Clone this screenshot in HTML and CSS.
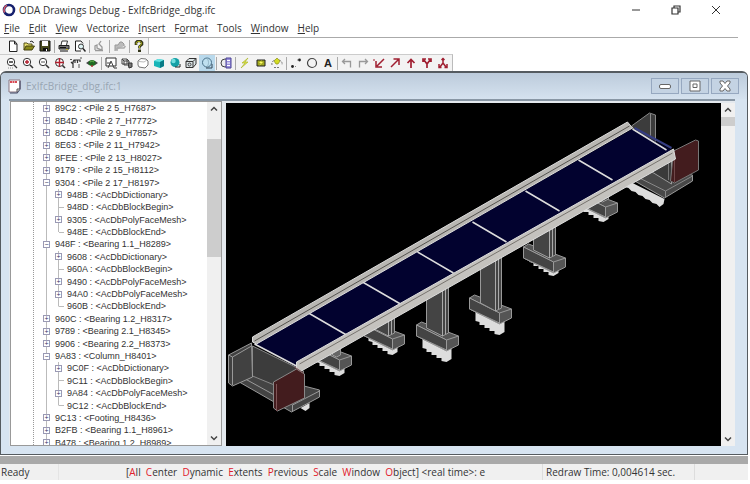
FILE: index.html
```html
<!DOCTYPE html>
<html lang="en">
<head>
  <meta charset="UTF-8">
  <title>ODA Drawings Debug - ExIfcBridge_dbg.ifc</title>
  <link rel="stylesheet" href="styles.css">
</head>
<body>
  <header class="titlebar">
    <svg class="logo" viewBox="0 0 14 14"><circle cx="7" cy="7" r="5" fill="none" stroke="#16206e" stroke-width="2.6"/><path d="M2.6 9.5A5 5 0 0 1 5 2.4" fill="none" stroke="#e0606a" stroke-width="1.4"/></svg>
    <h1>ODA Drawings Debug - ExIfcBridge_dbg.ifc</h1>
    <div class="window-buttons">
      <button aria-label="Minimize"><svg viewBox="0 0 10 10"><path d="M1 5h8" stroke="#333"/></svg></button>
      <button aria-label="Restore"><svg viewBox="0 0 10 10" fill="none" stroke="#333" stroke-width="1.2"><path d="M1 3h6v6H1zM3 3V1h6v6H7"/></svg></button>
      <button aria-label="Close"><svg viewBox="0 0 10 10"><path d="M1 1l8 8M9 1L1 9" stroke="#333"/></svg></button>
    </div>
  </header>

  <nav class="menu">
    <button><u>F</u>ile</button>
    <button><u>E</u>dit</button>
    <button><u>V</u>iew</button>
    <button>Vectorize</button>
    <button><u>I</u>nsert</button>
    <button>F<u>o</u>rmat</button>
    <button>Tools</button>
    <button><u>W</u>indow</button>
    <button><u>H</u>elp</button>
  </nav>

  <div class="toolbar">
    <button aria-label="New"><svg viewBox="0 0 12 12"><path d="M2.5 1h5l2.500 3v7.500H2.500zM7.500 1v3H10" fill="#fff" stroke="#222"/></svg></button>
    <button aria-label="Open"><svg viewBox="0 0 12 12"><path d="M1 10V3h3l1 1h4v2" fill="#e8e070" stroke="#55501a"/><path d="M1 10l2-4h8.500l-2.500 4z" fill="#8a8a18" stroke="#444010"/><path d="M7 2c1-1.500 3-1 3.500 1" fill="none" stroke="#222"/></svg></button>
    <button aria-label="Save"><svg viewBox="0 0 12 12"><path d="M1 1h10v10H1z" fill="#4a4c20" stroke="#111"/><path d="M3 1h6v5H3z" fill="#fff"/><path d="M4 8h5v3H4z" fill="#111"/><path d="M7 9h1v2H7z" fill="#fff"/></svg></button>
    <i></i>
    <button aria-label="Print"><svg viewBox="0 0 12 12"><path d="M3 5l1-4h5.500l-1 4" fill="#fff" stroke="#333"/><path d="M1 5.500h10V9H1z" fill="#777" stroke="#222"/><path d="M2 11h8M2 7.500h6" stroke="#111"/><path d="M8 9.500h2" stroke="#bdb52a"/></svg></button>
    <button aria-label="Print preview"><svg viewBox="0 0 12 12"><path d="M7 11H1.500V1H7l2 2.500" fill="#fff" stroke="#222"/><circle cx="7" cy="6.500" r="2.500" fill="#dff4f4" stroke="#333"/><path d="M9 8.500l2.500 3" stroke="#222" stroke-width="1.500"/></svg></button>
    <i></i>
    <button aria-label="Cut" disabled><svg viewBox="0 0 12 12"><path d="M2 10V6l2-1v3l5 2V7L6 4l2-3M2 10.500h8" fill="none" stroke="#999" stroke-width="1.300"/></svg></button>
    <i class="wide"></i>
    <button aria-label="Paste" disabled><svg viewBox="0 0 12 12"><path d="M1 11V5h3l2-3h2l2 2v2" fill="#bbb" stroke="#999"/><path d="M3 8h7l1.500-2M3 8v3" fill="none" stroke="#aaa" stroke-width="1.500"/></svg></button>
    <i></i>
    <button aria-label="About"><svg viewBox="0 0 12 12"><path d="M3 5V2.500L4.500 1h3L9 2.500v2L6.500 6.500V8.500" fill="none" stroke="#33351a" stroke-width="2.600"/><path d="M3.300 4.500v-2l1.500-1h2.500l1 1v2L6.500 6v2" fill="none" stroke="#b3b51c"/><path d="M5 9.500h3V12H5z" fill="#33351a"/></svg></button>
  </div>

  <div class="toolbar toolbar-view">
    <button aria-label="Zoom window"><svg viewBox="0 0 12 12"><circle cx="5" cy="5" r="3.700" fill="#fff" stroke="#333"/><path d="M3 5h4M8 8l3 3" stroke="#333" stroke-width="1.300"/><path d="M2 11h6" stroke="#888" stroke-dasharray="1 1"/></svg></button>
    <button aria-label="Zoom in"><svg viewBox="0 0 12 12"><circle cx="5" cy="5" r="3.700" fill="#fff" stroke="#333"/><path d="M3 5h4M5 3v4" stroke="#b3202f" stroke-width="1.400"/><path d="M8 8l3 3" stroke="#333" stroke-width="1.600"/></svg></button>
    <button aria-label="Zoom out"><svg viewBox="0 0 12 12"><circle cx="5" cy="5" r="3.700" fill="#fff" stroke="#333"/><path d="M3 5h4" stroke="#555"/><path d="M8 8l3 3" stroke="#333" stroke-width="1.600"/></svg></button>
    <button aria-label="Zoom extents"><svg viewBox="0 0 12 12"><circle cx="5.500" cy="5.500" r="4" fill="#fff" stroke="#333"/><path d="M1 5.500h9M5.500 1v9" stroke="#b3202f" stroke-width="1.400"/><path d="M8.500 8.500L11 11" stroke="#333" stroke-width="1.600"/></svg></button>
    <button aria-label="Pan"><svg viewBox="0 0 12 12"><path d="M3 11V5l1-2h6v2M5 3v3M7.500 3v3M3 7L1 5" fill="none" stroke="#333" stroke-width="1.200"/><path d="M0 2.500h2M10 1h2M9 7v4" stroke="#555"/></svg></button>
    <button aria-label="Orbit"><svg viewBox="0 0 12 12"><path d="M0 6l3-2v4zM12 6L9 4v4z" fill="#444"/><ellipse cx="6" cy="6" rx="3.500" ry="3" fill="#1d6a20"/><path d="M4 5l2-1 2 1" stroke="#65b04c" fill="none"/><circle cx="6" cy="9" r="1" fill="#a33"/></svg></button>
    <i></i>
    <button aria-label="2D wireframe"><svg viewBox="0 0 12 12"><path d="M1 1h10v8H1z" fill="#fff" stroke="#333"/><path d="M3 11l3-7 3 7M2 6h4" fill="none" stroke="#444"/><path d="M9 11h3" stroke="#333"/></svg></button>
    <button aria-label="3D wireframe"><svg viewBox="0 0 12 12"><path d="M1 2h5v5H1zM3 4h5v4H3zM1 2l2 2M6 2l2 2" fill="none" stroke="#444"/><path d="M7 6h4v4l-3 1z" fill="#777" stroke="#333"/></svg></button>
    <button aria-label="Hidden line"><svg viewBox="0 0 12 12"><path d="M1 4l3-2.500 5 .5 2 2v4l-3 3-6-1-1-2z" fill="#fff" stroke="#777"/><path d="M2 4.500l5 .5 3-2" fill="none" stroke="#bbb"/></svg></button>
    <button aria-label="Flat shaded"><svg viewBox="0 0 12 12"><path d="M1 4l4-2 6 1v6l-4 2-6-2z" fill="#18b5b8"/><path d="M1 4l4-2 6 1-4 2z" fill="#69e4e4"/><path d="M7 5l4-2v6l-4 2z" fill="#087b86"/></svg></button>
    <button aria-label="Gouraud shaded"><svg viewBox="0 0 12 12"><circle cx="6" cy="5.500" r="4.500" fill="#15a0a6"/><circle cx="4.500" cy="4" r="2.200" fill="#72dede"/><path d="M6 10h5V7" stroke="#222" fill="none"/></svg></button>
    <button aria-label="Flat shaded with wireframe"><svg viewBox="0 0 12 12"><path d="M1 4.500L4 1.500h7v5.500L8 10.500H1zM1 4.500h7v6M8 4.500l3-3" fill="#dde6e8" stroke="#333"/><circle cx="4.500" cy="7.500" r="1.500" fill="none" stroke="#444"/></svg></button>
    <button class="active" aria-label="Gouraud shaded with wireframe"><svg viewBox="0 0 12 12"><circle cx="6" cy="5.500" r="4.500" fill="#bfe0f0" stroke="#4a7189"/><path d="M6 1c2 3 2 6 0 9" fill="none" stroke="#8fb2c4"/><path d="M5 11h6V7" fill="none" stroke="#345"/></svg></button>
    <i></i>
    <button aria-label="Render"><svg viewBox="0 0 12 12"><circle cx="5" cy="6" r="4" fill="#eee" stroke="#444"/><path d="M6 1h5v10H6z" fill="#9a90dc" stroke="#4b4396"/><path d="M7 3.500h3M7 6h3M7 8.500h3" stroke="#fff"/></svg></button>
    <i></i>
    <button aria-label="Regenerate"><svg viewBox="0 0 12 12"><path d="M9 1L3 6h3l-4 5 7-6H6z" fill="#dbe44a" stroke="#a6b020" stroke-width=".6"/></svg></button>
    <button aria-label="View regen"><svg viewBox="0 0 12 12"><path d="M2 3h8v6H2z" fill="#a4aa22" stroke="#222"/><path d="M7 3L4 6h2l-2 3 4-4H6z" fill="#ff6"/></svg></button>
    <button aria-label="Regenerate all"><svg viewBox="0 0 12 12"><path d="M1 8a4 4 0 0 1 3-5M8 3a4 4 0 0 1 3 5M3 10.500h6" fill="none" stroke="#777" stroke-dasharray="2 1"/><path d="M6 1l3 3-2 3H5L3 4z" fill="#d3dc22" stroke="#8a8e18" stroke-width=".7"/></svg></button>
    <i></i>
    <button aria-label="Line"><svg viewBox="0 0 12 12"><circle cx="2.500" cy="9.500" r="1.400" fill="#222"/><circle cx="9.500" cy="3" r="1.400" fill="#222"/><path d="M5 9.500h1M8 3h-1" stroke="#888"/></svg></button>
    <button aria-label="Circle"><svg viewBox="0 0 12 12"><circle cx="6" cy="6" r="4.500" fill="none" stroke="#444" stroke-width="1.200"/></svg></button>
    <button aria-label="Text"><svg viewBox="0 0 12 12"><text x="6" y="10" text-anchor="middle">A</text></svg></button>
    <i></i>
    <button aria-label="Undo" disabled><svg viewBox="0 0 12 12"><path d="M4 2L1.500 4.500 4 7M2 4.500h7.500v6" fill="none" stroke="#999" stroke-width="1.300"/></svg></button>
    <button aria-label="Redo" disabled><svg viewBox="0 0 12 12"><path d="M8 2l2.500 2.500L8 7M10 4.500H2.500v6" fill="none" stroke="#999" stroke-width="1.300"/></svg></button>
    <button aria-label="Back"><svg viewBox="0 0 12 12"><path d="M11 2L4 9M3 4v6h6" fill="none" stroke="#a01f31" stroke-width="1.500"/><path d="M0 3h2" stroke="#a01f31"/></svg></button>
    <button aria-label="Forward"><svg viewBox="0 0 12 12"><path d="M2 10l8-8M4.500 2H10v6" fill="none" stroke="#a01f31" stroke-width="1.500"/></svg></button>
    <button aria-label="Up"><svg viewBox="0 0 12 12"><path d="M6 11V2M2.500 6L6 2.500 9.500 6" fill="none" stroke="#a01f31" stroke-width="1.700"/></svg></button>
    <button aria-label="Merge"><svg viewBox="0 0 12 12"><path d="M6 11V7L3 3M6 7l3-4M2 5V2h3M10 5V2H7" fill="none" stroke="#a01f31" stroke-width="1.700"/></svg></button>
    <button aria-label="Split"><svg viewBox="0 0 12 12"><path d="M6 1v5L3 10M6 6l3 4M2 7v3.500h2.500M10 7v3.500H7.500M4.500 3L6 1.500 7.500 3" fill="none" stroke="#a01f31" stroke-width="1.500"/></svg></button>
  </div>

  <main class="child">
    <div class="child-title">
      <svg class="doc" viewBox="0 0 16 16"><path d="M2 2h11v9l-3 3H2z" fill="#fff" stroke="#8a7580"/><path d="M13 3v8l-3 4H3" fill="none" stroke="#454a66" stroke-width="1.200"/><path d="M3 4h7" stroke="#d84a55" stroke-width="2" stroke-dasharray="2 .5"/><path d="M10 14v-3h3" fill="#ddd" stroke="#555"/></svg>
      <h2>ExIfcBridge_dbg.ifc:1</h2>
      <div class="child-buttons">
        <button aria-label="Minimize child"><svg viewBox="0 0 12 12"><rect x="0.500" y="4.500" width="11" height="4" rx="1.500"/></svg></button>
        <button aria-label="Maximize child"><svg viewBox="0 0 12 12"><path d="M1 1h10v10H1z"/><path d="M4 4h4v3.500H4z"/></svg></button>
        <button aria-label="Close child"><svg viewBox="0 0 12 12"><path d="M1 1h3l2 2.500L8 1h3v2L8.500 6 11 9v2H8L6 8.500 4 11H1V9l2.500-3L1 3z"/></svg></button>
      </div>
    </div>

    <div class="panes">
      <div class="tree-pane">
        <ul class="tree">
          <li><button>+</button>89C2 : &lt;Pile 2 5_H7687&gt;</li>
          <li><button>+</button>8B4D : &lt;Pile 2 7_H7772&gt;</li>
          <li><button>+</button>8CD8 : &lt;Pile 2 9_H7857&gt;</li>
          <li><button>+</button>8E63 : &lt;Pile 2 11_H7942&gt;</li>
          <li><button>+</button>8FEE : &lt;Pile 2 13_H8027&gt;</li>
          <li><button>+</button>9179 : &lt;Pile 2 15_H8112&gt;</li>
          <li><button>−</button>9304 : &lt;Pile 2 17_H8197&gt;</li>
          <li class="sub"><button>+</button>948B : &lt;AcDbDictionary&gt;</li>
          <li class="sub"><span></span>948D : &lt;AcDbBlockBegin&gt;</li>
          <li class="sub"><button>+</button>9305 : &lt;AcDbPolyFaceMesh&gt;</li>
          <li class="sub last"><span></span>948E : &lt;AcDbBlockEnd&gt;</li>
          <li><button>−</button>948F : &lt;Bearing 1.1_H8289&gt;</li>
          <li class="sub"><button>+</button>9608 : &lt;AcDbDictionary&gt;</li>
          <li class="sub"><span></span>960A : &lt;AcDbBlockBegin&gt;</li>
          <li class="sub"><button>+</button>9490 : &lt;AcDbPolyFaceMesh&gt;</li>
          <li class="sub"><button>+</button>94A0 : &lt;AcDbPolyFaceMesh&gt;</li>
          <li class="sub last"><span></span>960B : &lt;AcDbBlockEnd&gt;</li>
          <li><button>+</button>960C : &lt;Bearing 1.2_H8317&gt;</li>
          <li><button>+</button>9789 : &lt;Bearing 2.1_H8345&gt;</li>
          <li><button>+</button>9906 : &lt;Bearing 2.2_H8373&gt;</li>
          <li><button>−</button>9A83 : &lt;Column_H8401&gt;</li>
          <li class="sub"><button>+</button>9C0F : &lt;AcDbDictionary&gt;</li>
          <li class="sub"><span></span>9C11 : &lt;AcDbBlockBegin&gt;</li>
          <li class="sub"><button>+</button>9A84 : &lt;AcDbPolyFaceMesh&gt;</li>
          <li class="sub last"><span></span>9C12 : &lt;AcDbBlockEnd&gt;</li>
          <li><button>+</button>9C13 : &lt;Footing_H8436&gt;</li>
          <li><button>+</button>B2FB : &lt;Bearing 1.1_H8961&gt;</li>
          <li><button>+</button>B478 : &lt;Bearing 1.2_H8989&gt;</li>
        </ul>
        <div class="scrollbar tree-scroll">
          <button aria-label="Scroll tree up"><svg viewBox="0 0 8 8"><path d="M1 5.500l3-3 3 3"/></svg></button>
          <div class="track"><div class="thumb"></div></div>
          <button aria-label="Scroll tree down"><svg viewBox="0 0 8 8"><path d="M1 2.500l3 3 3-3"/></svg></button>
        </div>
      </div>

      <div class="view-pane">
        <svg class="model" viewBox="227 103 494 343" preserveAspectRatio="xMidYMid meet">
          <defs>
            <!-- one pier: column standing on a footing block -->
            <g id="pier" stroke="#999" stroke-linejoin="round">
              <path d="M417 325l5-3 37 14v9l-12 6-30-15z" fill="#555"/>
              <path d="M417 325l30 15 12-4M447 340v11" fill="none"/>
              <path d="M417 325l30 15v10l-30-14z" fill="#444"/>
            </g>
            <path id="column" d="M427 290v38l16 8 6-3v-50z" fill="#444" stroke="#999"/>
            <path id="column-edge" d="M443 284v52M446 284v50" fill="none" stroke="#aaa"/>
            <path id="piles" d="M423 335v13l4 1v3l5 0v3l5 0v3l5 0v3l5 1 5-3v-12z" fill="#ddd"/>
          </defs>

          <!-- far abutment -->
          <path d="M632 126l18-13 6 2v28l-10 5z" fill="#3c3c3c" stroke="#888"/>
          <path d="M651 114v22" stroke="#888"/>
          <path d="M622 184l5-4 38 19-1 5-4 3-3-3-4-1-3-3-4-1-3-3-4-1-3-3-4-1-3-3-4-1z" fill="#ddd"/>
          <path d="M630 178l20-10 43 7v6l-28 17z" fill="#484848" stroke="#999"/>
          <path d="M634 175l32 16 27-15M666 191v7" fill="none" stroke="#888"/>
          <path d="M646 168l26-12v28z" fill="#3a3a3a" stroke="#999"/>
          <path d="M655 166l14-8v22" fill="none" stroke="#777"/>
          <path d="M674 151l22-11 3 1v29l-24 13-4-2z" fill="#431c1e" stroke="#777"/>
          <path d="M675 153v29" stroke="#70484a"/>

          <!-- near abutment -->
          <path d="M238 381l16-8 66 17v7l-28 15z" fill="#444" stroke="#999"/>
          <path d="M244 378l49 27 27-14M293 405v7" fill="none" stroke="#999"/>
          <path d="M301 408l9-5v5l-4 3z" fill="#ddd"/>
          <path d="M253 346l51 25v26l-51-21z" fill="#3c3c3c" stroke="#888"/>
          <path d="M229 355l23-12 1 34-20 9-4-3z" fill="#414141" stroke="#999"/>
          <path d="M233 357v28M229 355l4 2 19-11" fill="none" stroke="#999"/>

          <!-- piers, back to front -->
          <use href="#piles" x="157" y="-140"/>
          <use href="#pier" x="159" y="-133"/>
          <use href="#column" x="160" y="-134"/>
          <use href="#piles" x="107" y="-86"/>
          <use href="#pier" x="107" y="-78"/>
          <use href="#column" x="107" y="-78"/>
          <use href="#column-edge" x="107" y="-78"/>
          <use href="#piles" x="53" y="-27"/>
          <use href="#pier" x="53" y="-27"/>
          <path d="M481 262v41l15 8 6-3v-55z" fill="#444" stroke="#999"/>
          <path d="M496 255v56M499 255v54" stroke="#aaa"/>
          <use href="#piles"/>
          <use href="#pier"/>
          <use href="#column"/>
          <use href="#column-edge"/>
          <use href="#piles" x="-54" y="-7"/>
          <use href="#pier" x="-54" y="-1"/>
          <use href="#column" x="-54"/>
          <use href="#column-edge" x="-54"/>
          <use href="#piles" x="-107" y="14"/>
          <use href="#pier" x="-107" y="20"/>
          <path d="M333 345v10l4 2 4-2v-10z" fill="#666" stroke="#999"/>

          <!-- deck -->
          <path d="M255 344L633 129l39 21-375 217z" fill="#02022f"/>
          <path d="M255 344l42 22M309 313l38 22M363 282l38 22M418 252l36 21M473 222l34 20M526 191l34 20M579 160l34 20M633 129l34 21" stroke="#ddd" stroke-width="1.500"/>
          <path d="M635 128l37 20" stroke="#343c82" stroke-width="2"/>
          <path d="M253 337L628 122l5 6-376 216-4-2z" fill="#b9b7b3" stroke="#ddd"/>
          <path d="M255 341L630 126" stroke="#55534f"/>
          <path d="M297 362L674 149l2 10-376 213-3-3z" fill="#c4c2be" stroke="#ddd"/>
          <path d="M300 364L673 153" stroke="#77736e"/>
          <path d="M274 382l23-13 8 5v24l-27 13-4-3z" fill="#431c1e" stroke="#888"/>
          <path d="M277 384v27M295 367l9 6" stroke="#805558" fill="none"/>
        </svg>
        <div class="scrollbar">
          <button aria-label="Scroll view up"><svg viewBox="0 0 8 8"><path d="M1 5.500l3-3 3 3"/></svg></button>
          <div class="track"><div class="thumb small"></div></div>
          <button aria-label="Scroll view down"><svg viewBox="0 0 8 8"><path d="M1 2.500l3 3 3-3"/></svg></button>
        </div>
      </div>
    </div>
  </main>

  <footer class="status">
    <span class="ready">Ready</span>
    <span class="command">[<b>A</b>ll&nbsp; <b>C</b>enter&nbsp; <b>D</b>ynamic&nbsp; <b>E</b>xtents&nbsp; <b>P</b>revious&nbsp; <b>S</b>cale&nbsp; <b>W</b>indow&nbsp; <b>O</b>bject] &lt;real time&gt;: e</span>
    <span class="redraw">Redraw Time: 0,004614 sec.</span>
    <span class="cell"></span>
  </footer>
</body>
</html>
```

FILE: styles.css
```css
* { box-sizing: border-box; }
body {
  margin: 0;
  padding: 0 2px 4px 0;
  height: 100vh;
  display: flex;
  flex-direction: column;
  background: #fff;
  color: #333;
  font-family: "Open Sans", sans-serif;
  font-size: 10px;
}
h1, h2 { margin: 0; font-weight: normal; }
button {
  padding: 0;
  border: 0;
  background: none;
  color: inherit;
  font: inherit;
}
svg { display: block; }

.titlebar { display: flex; align-items: center; height: 20px; padding-left: 2px; }
.logo { width: 14px; height: 14px; margin-right: 3px; }
.titlebar h1 { flex: 1; font-size: 10px; line-height: 20px; }
.window-buttons { display: flex; padding-right: 12px; }
.window-buttons button { width: 40px; height: 20px; }
.window-buttons svg { width: 10px; height: 10px; margin: auto; }

.menu {
  display: flex;
  gap: 9px;
  height: 18px;
  padding-left: 4px;
  margin-right: 10px;
  border-bottom: 1px solid #aaa;
  line-height: 17px;
}

.toolbar {
  display: flex;
  align-items: center;
  align-self: flex-start;
  height: 16px;
  padding: 0 1px 0 5px;
  background: #f3f3f3;
  border-right: 1px solid #bbb;
}
.toolbar-view {
  height: 17px;
  padding-left: 4px;
  border-top: 1px solid #ccc;
}
.toolbar button { width: 16px; height: 16px; }
.toolbar svg { width: 12px; height: 12px; margin: auto; }
.toolbar text { font: bold 11px "Liberation Sans", sans-serif; fill: #222; }
.toolbar i { width: 1px; height: 13px; margin: 0 1px; background: #aaa; }
.toolbar .wide { margin: 0 2px; }
.toolbar .active { background: #b9d9ec; }

.child {
  flex: 1;
  min-height: 0;
  display: flex;
  flex-direction: column;
  padding: 0 12px 8px 8px;
  margin-bottom: 1px;
  background: #d7e4f1;
  border: 1px solid #555b60;
  border-top-width: 2px;
  border-radius: 6px 6px 0 0;
}
.child-title {
  display: flex;
  align-items: center;
  height: 26px;
  margin: 0 -12px 0 -8px;
  padding: 0 8px 0 6px;
  border-radius: 4px 4px 0 0;
  background: linear-gradient(#bccbdb, #d5e2ef);
}
.doc { width: 16px; height: 16px; margin-right: 3px; }
.child-title h2 { flex: 1; font-size: 10px; color: #98a5b2; }
.child-buttons { display: flex; gap: 2px; }
.child-buttons button { width: 28px; height: 16px; border: 1px solid #96a8c0; background: #c4d3e3; }
.child-buttons svg { width: 12px; height: 12px; margin: auto; fill: #fff; stroke: #666; }

.panes {
  flex: 1;
  min-height: 0;
  display: flex;
  gap: 4px;
  padding-left: 1px;
  border-top: 2px solid #8997a5;
  background: #e4e9ee;
}
.tree-pane {
  flex: 0 0 212px;
  display: flex;
  border: 1px solid #999;
  background: #fff;
  overflow: hidden;
}
.tree {
  flex: 1;
  display: flex;
  flex-direction: column;
  height: calc(100% + 4px);
  margin: 0 0 0 22px;
  padding: 0;
  border-left: 1px dotted #999;
  list-style: none;
  font-family: "Liberation Sans", sans-serif;
  font-size: 9px;
  white-space: nowrap;
}
.tree li {
  flex: 1;
  display: flex;
  align-items: center;
  min-height: 0;
  padding-left: 9px;
  line-height: 12px;
  background: linear-gradient(#bbb, #bbb) 12px 0 / 1px 100% no-repeat;
}
.tree .sub {
  padding-left: 21px;
  background:
    linear-gradient(#bbb, #bbb) 12px 0 / 1px 100% no-repeat,
    linear-gradient(#bbb, #bbb) 24px 0 / 1px 100% no-repeat;
}
.tree .last {
  background:
    linear-gradient(#bbb, #bbb) 12px 0 / 1px 100% no-repeat,
    linear-gradient(#bbb, #bbb) 24px 0 / 1px 50% no-repeat;
}
.tree button {
  width: 7px;
  height: 7px;
  margin-right: 5px;
  border: 1px solid #9a9ab4;
  background: #fff;
  color: #336;
  font-size: 7px;
  line-height: 5px;
}
.tree span { width: 5px; height: 1px; margin: 0 3px 0 4px; background: #bbb; }

.scrollbar { display: flex; flex-direction: column; width: 14px; background: #f0f0f0; }
.scrollbar button { height: 14px; }
.scrollbar svg { width: 8px; height: 8px; margin: auto; fill: none; stroke: #444; stroke-width: 1.5; }
.track { flex: 1; }
.thumb { height: 118px; background: #cdcdcd; }
.tree-scroll .thumb { margin-top: 23px; }
.thumb.small { height: 9px; }

.view-pane {
  flex: 1;
  min-width: 0;
  display: flex;
  border-top: 2px solid #e4e9ee;
  background: #000;
}
.model { flex: 1; min-width: 0; height: 100%; }

.status {
  display: flex;
  align-items: center;
  height: 24px;
  border-top: 8px solid #a9a9a9;
  background: #f0f0f0;
  white-space: nowrap;
  line-height: 16px;
}
.ready { width: 59px; padding-left: 1px; border-right: 1px solid #e4e4e4; }
.command { flex: 1; padding-left: 67px; }
.command b { color: #e0202c; font-weight: normal; }
.redraw { width: 152px; padding-left: 3px; border-left: 1px solid #ddd; }
.cell { width: 54px; height: 16px; border-left: 1px solid #ddd; }
```
